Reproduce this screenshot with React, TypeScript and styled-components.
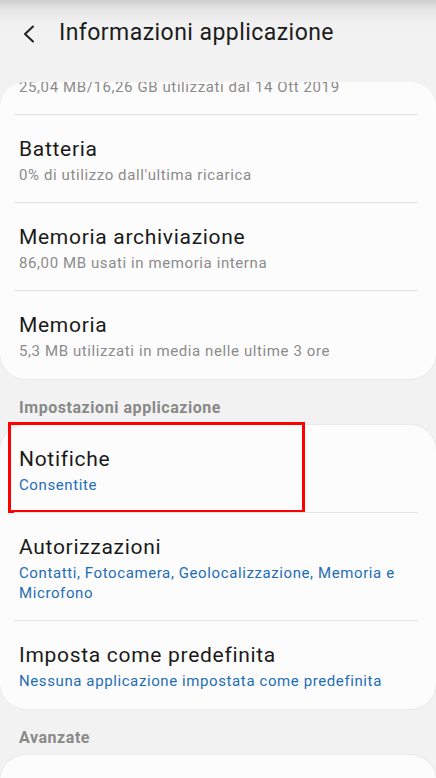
import React from "react";
import styled, { createGlobalStyle } from "styled-components";

const GlobalStyle = createGlobalStyle`
  html, body { margin: 0; padding: 0; background: #f2f2f2; }
  body { font-family: Roboto, "Noto Sans", sans-serif; -webkit-font-smoothing: antialiased; }
`;

const Screen = styled.div`
  width: 436px;
  height: 778px;
  overflow: hidden;
  display: flex;
  flex-direction: column;
  background: #f2f2f2;
`;

const Header = styled.header`
  height: 82px;
  flex: none;
  display: flex;
  align-items: flex-start;
  padding: 19px 0 0 0;
  box-sizing: border-box;
  background: linear-gradient(#cdcdcd 0px, #e6e6e6 10px, #f1f1f1 24px, #f2f2f2 40px);
`;

const BackButton = styled.button`
  border: 0;
  background: none;
  padding: 0;
  margin: 6px 0 0 20px;
  width: 16px;
  height: 18px;
  display: flex;
  align-items: center;
  justify-content: center;
  color: #222;
`;

const Title = styled.h1`
  margin: 0 0 0 23px;
  font-size: 23px;
  font-weight: 400;
  line-height: 28px;
  color: #1c1c1c;
  letter-spacing: 0.45px;
`;

const Viewport = styled.div`
  flex: 1;
  overflow: hidden;
  border-radius: 26px 26px 0 0;
`;

const Scroller = styled.div`
  margin-top: -55px;
  display: flex;
  flex-direction: column;
`;

const Card = styled.section`
  background: #fcfcfc;
  border-radius: 26px;
  box-shadow: 0 0 0 1px rgba(0, 0, 0, 0.035);
  display: flex;
  flex-direction: column;
`;

const Row = styled.div<{ $divider?: boolean }>`
  position: relative;
  padding: 21px 12px 18px 19px;
  display: flex;
  flex-direction: column;
  gap: 3px;
  &::after {
    content: "";
    display: ${(p) => (p.$divider ? "block" : "none")};
    position: absolute;
    left: 14px;
    right: 18px;
    bottom: 0;
    height: 1px;
    background: #e3e3e3;
  }
`;

const RowTitle = styled.div`
  font-size: 21px;
  line-height: 26px;
  letter-spacing: 0.7px;
  color: #1a1a1a;
`;

const RowSub = styled.div<{ $accent?: boolean }>`
  font-size: 15px;
  line-height: 20px;
  letter-spacing: 0.6px;
  color: ${(p) => (p.$accent ? "#1e6db5" : "#8b8b8b")};
`;

const SectionLabel = styled.div`
  padding: 19px 19px 7px 19px;
  font-size: 16px;
  line-height: 20px;
  font-weight: 700;
  letter-spacing: 0.55px;
  color: #898989;
`;

const Highlight = styled.div`
  position: absolute;
  left: 8px;
  top: -3px;
  width: 297px;
  height: 91px;
  box-sizing: border-box;
  border: 3px solid #ff0000;
  pointer-events: none;
`;

type Item = { title: string; sub: string; accent?: boolean; highlight?: boolean };

const group1: Item[] = [
  { title: "Utilizzo dati mobili", sub: "25,04 MB/16,26 GB utilizzati dal 14 Ott 2019" },
  { title: "Batteria", sub: "0% di utilizzo dall'ultima ricarica" },
  { title: "Memoria archiviazione", sub: "86,00 MB usati in memoria interna" },
  { title: "Memoria", sub: "5,3 MB utilizzati in media nelle ultime 3 ore" },
];

const group2: Item[] = [
  { title: "Notifiche", sub: "Consentite", accent: true, highlight: true },
  {
    title: "Autorizzazioni",
    sub: "Contatti, Fotocamera, Geolocalizzazione, Memoria e Microfono",
    accent: true,
  },
  {
    title: "Imposta come predefinita",
    sub: "Nessuna applicazione impostata come predefinita",
    accent: true,
  },
];

const group3: Item[] = [
  { title: "Mostra sopra altre app", sub: "Consentito", accent: true },
];

const Group = ({ items }: { items: Item[] }) => (
  <Card>
    {items.map((it, i) => (
      <Row key={it.title} $divider={i < items.length - 1}>
        <RowTitle>{it.title}</RowTitle>
        <RowSub $accent={it.accent}>{it.sub}</RowSub>
        {it.highlight && <Highlight />}
      </Row>
    ))}
  </Card>
);

export default function App() {
  return (
    <>
      <GlobalStyle />
      <Screen>
        <Header>
          <BackButton aria-label="Indietro">
            <svg width="13" height="18" viewBox="0 0 13 18" fill="none">
              <path d="M11 1.5 L3 9 L11 16.5" stroke="#222" strokeWidth="2" strokeLinecap="round" strokeLinejoin="round" />
            </svg>
          </BackButton>
          <Title>Informazioni applicazione</Title>
        </Header>
        <Viewport>
          <Scroller>
            <Group items={group1} />
            <SectionLabel>Impostazioni applicazione</SectionLabel>
            <Group items={group2} />
            <SectionLabel>Avanzate</SectionLabel>
            <Group items={group3} />
          </Scroller>
        </Viewport>
      </Screen>
    </>
  );
}
